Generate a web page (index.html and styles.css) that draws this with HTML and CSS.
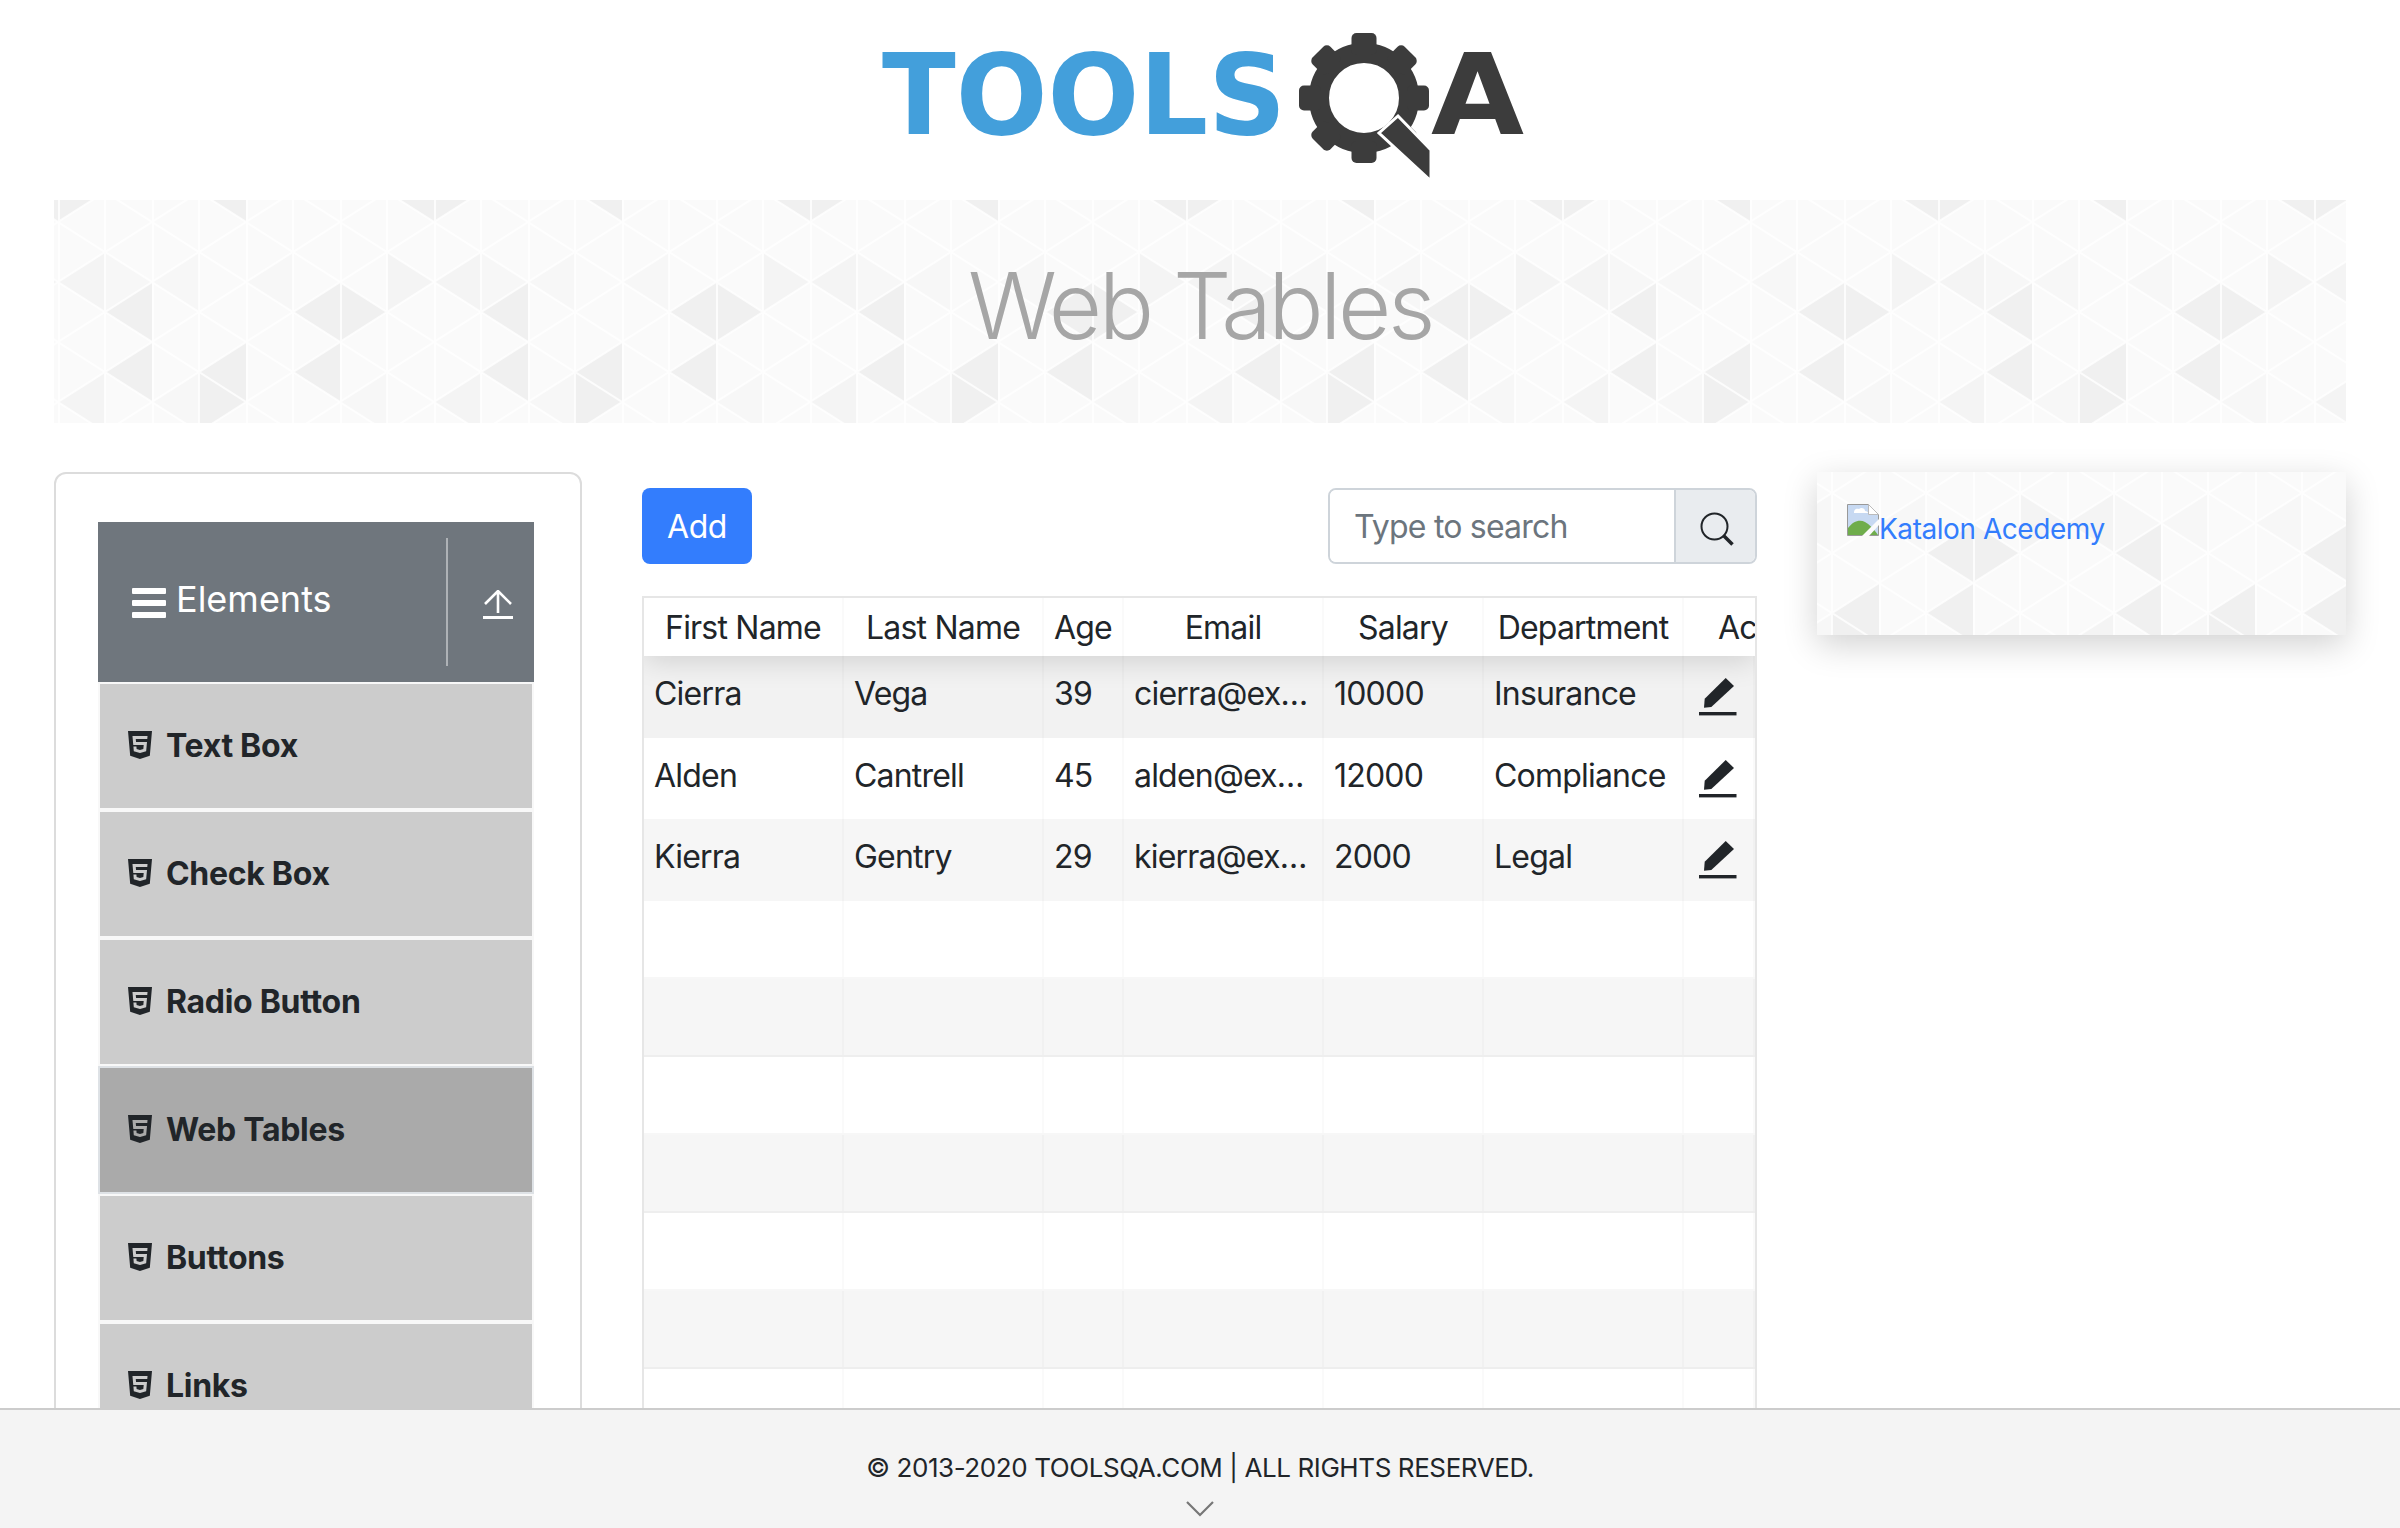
FILE: index.html
```html
<!DOCTYPE html>
<html lang="en">
<head>
  <meta charset="UTF-8" />
  <title>Web Tables</title>
  <link rel="stylesheet" href="styles.css">
</head>
<body>
  <svg class="defs" width="0" height="0">
    <symbol id="html5" viewBox="0 0 384 512">
      <path d="M0 32l34.9 395.8L191.5 480l157.6-52.2L384 32H0zm308.2 127.9H124.4l4.1 49.4h175.6l-13.6 148.4-97.9 27v.3h-1.1l-98.7-27.3-6-75.8h47.7L138 320l53.5 14.5 53.7-14.5 6-62.2H84.3L71.5 112.2h241.1l-4.4 47.7z"/>
    </symbol>
    <symbol id="pencil" viewBox="0 0 38 38">
      <path d="M26.7 0L35 8 12.3 29l-7.3.7.7-9z"/>
      <rect x="0" y="34" width="37.5" height="3.4"/>
    </symbol>
  </svg>

  <div class="page">
    <header class="logo-bar">
      <svg class="logo" width="650" height="200" viewBox="875 0 650 200">
        <text class="logo-tools" x="882" y="134" textLength="404" lengthAdjust="spacingAndGlyphs">TOOLS</text>
        <g class="logo-gear">
          <circle cx="1364" cy="98" r="45" fill="none" stroke="#3c3c3c" stroke-width="20"/>
          <rect x="1351.5" y="33" width="25" height="22" rx="5"/>
          <rect x="1351.5" y="33" width="25" height="22" rx="5" transform="rotate(45 1364 98)"/>
          <rect x="1351.5" y="33" width="25" height="22" rx="5" transform="rotate(90 1364 98)"/>
          <rect x="1351.5" y="33" width="25" height="22" rx="5" transform="rotate(135 1364 98)"/>
          <rect x="1351.5" y="33" width="25" height="22" rx="5" transform="rotate(180 1364 98)"/>
          <rect x="1351.5" y="33" width="25" height="22" rx="5" transform="rotate(225 1364 98)"/>
          <rect x="1351.5" y="33" width="25" height="22" rx="5" transform="rotate(270 1364 98)"/>
          <rect x="1351.5" y="33" width="25" height="22" rx="5" transform="rotate(315 1364 98)"/>
        </g>
        <path d="M1398 116l33 34v31l-52-48z" fill="#3c3c3c" stroke="#fff" stroke-width="3"/>
        <text class="logo-a" x="1431" y="134" textLength="93" lengthAdjust="spacingAndGlyphs">A</text>
      </svg>
    </header>

    <div class="banner tri-bg">
      <h1 class="banner-title">Web Tables</h1>
    </div>

    <div class="content">
      <aside class="side-card">
        <div class="group-header">
          <div class="group-title">
            <span class="burger"><i></i><i></i><i></i></span>
            <span>Elements</span>
          </div>
          <div class="group-toggle">
            <svg width="30" height="30" viewBox="0 0 30 30" fill="none" stroke="#fff" stroke-width="2.600">
              <path d="M15 1v22M2 14L15 1l13 13"/>
              <path d="M0 27.500h30" stroke-width="3"/>
            </svg>
          </div>
        </div>
        <ul class="menu">
          <li class="menu-item"><svg class="item-icon"><use href="#html5"/></svg>Text Box</li>
          <li class="menu-item"><svg class="item-icon"><use href="#html5"/></svg>Check Box</li>
          <li class="menu-item"><svg class="item-icon"><use href="#html5"/></svg>Radio Button</li>
          <li class="menu-item active"><svg class="item-icon"><use href="#html5"/></svg>Web Tables</li>
          <li class="menu-item"><svg class="item-icon"><use href="#html5"/></svg>Buttons</li>
          <li class="menu-item"><svg class="item-icon"><use href="#html5"/></svg>Links</li>
        </ul>
      </aside>

      <main class="main">
        <div class="toolbar">
          <button class="add-btn">Add</button>
          <div class="search">
            <input class="search-input" type="text" placeholder="Type to search" />
            <span class="search-addon">
              <svg width="34" height="34" viewBox="0 0 34 34" fill="none" stroke="#212529" stroke-width="2">
                <circle cx="14.500" cy="14.500" r="13"/>
                <path d="M24 24l8.500 8.500" stroke-width="3.600"/>
              </svg>
            </span>
          </div>
        </div>

        <div class="grid-table">
          <div class="grid-row grid-head">
            <div class="cell">First Name</div>
            <div class="cell">Last Name</div>
            <div class="cell">Age</div>
            <div class="cell">Email</div>
            <div class="cell">Salary</div>
            <div class="cell">Department</div>
            <div class="cell cell-action">Action</div>
          </div>
          <div class="grid-row filled">
            <div class="cell">Cierra</div>
            <div class="cell">Vega</div>
            <div class="cell">39</div>
            <div class="cell">cierra@example.com</div>
            <div class="cell">10000</div>
            <div class="cell">Insurance</div>
            <div class="cell"><svg class="edit-icon"><use href="#pencil"/></svg></div>
          </div>
          <div class="grid-row filled">
            <div class="cell">Alden</div>
            <div class="cell">Cantrell</div>
            <div class="cell">45</div>
            <div class="cell">alden@example.com</div>
            <div class="cell">12000</div>
            <div class="cell">Compliance</div>
            <div class="cell"><svg class="edit-icon"><use href="#pencil"/></svg></div>
          </div>
          <div class="grid-row filled">
            <div class="cell">Kierra</div>
            <div class="cell">Gentry</div>
            <div class="cell">29</div>
            <div class="cell">kierra@example.com</div>
            <div class="cell">2000</div>
            <div class="cell">Legal</div>
            <div class="cell"><svg class="edit-icon"><use href="#pencil"/></svg></div>
          </div>
          <div class="grid-row"><div class="cell"></div><div class="cell"></div><div class="cell"></div><div class="cell"></div><div class="cell"></div><div class="cell"></div><div class="cell"></div></div>
          <div class="grid-row"><div class="cell"></div><div class="cell"></div><div class="cell"></div><div class="cell"></div><div class="cell"></div><div class="cell"></div><div class="cell"></div></div>
          <div class="grid-row"><div class="cell"></div><div class="cell"></div><div class="cell"></div><div class="cell"></div><div class="cell"></div><div class="cell"></div><div class="cell"></div></div>
          <div class="grid-row"><div class="cell"></div><div class="cell"></div><div class="cell"></div><div class="cell"></div><div class="cell"></div><div class="cell"></div><div class="cell"></div></div>
          <div class="grid-row"><div class="cell"></div><div class="cell"></div><div class="cell"></div><div class="cell"></div><div class="cell"></div><div class="cell"></div><div class="cell"></div></div>
          <div class="grid-row"><div class="cell"></div><div class="cell"></div><div class="cell"></div><div class="cell"></div><div class="cell"></div><div class="cell"></div><div class="cell"></div></div>
          <div class="grid-row"><div class="cell"></div><div class="cell"></div><div class="cell"></div><div class="cell"></div><div class="cell"></div><div class="cell"></div><div class="cell"></div></div>
        </div>
      </main>

      <div class="ad-col">
        <div class="ad-box tri-bg">
          <a class="ad-link" href="#">
            <svg class="broken-img" width="32" height="32" viewBox="0 0 32 32">
              <path d="M.5.5h21l10 10v21H.5z" fill="#c7d9f2" stroke="#999"/>
              <path d="M21.500.5v10h10z" fill="#fff" stroke="#bbb"/>
              <path d="M1 31V24c5-7 12-9 17-6 4 2 9 7 13 13z" fill="#6fad4c"/>
              <path d="M7 8c0-3 3-4 5-3 2-2 6-1 6 2 2 0 3 1 3 2H7z" fill="#fff"/>
              <path d="M15 32L32 15v6L22 32z" fill="#fbfbfb"/>
            </svg>Katalon Acedemy
          </a>
        </div>
      </div>
    </div>
  </div>

  <footer class="footer">
    <span class="footer-text">© 2013-2020 TOOLSQA.COM | ALL RIGHTS RESERVED.</span>
    <svg class="footer-chevron" width="28" height="16" viewBox="0 0 28 16" fill="none" stroke="#777" stroke-width="2.200">
      <path d="M1 1l13 13L27 1"/>
    </svg>
  </footer>
</body>
</html>
```

FILE: styles.css
```css
* {
  box-sizing: border-box;
}
html, body {
  height: 100%;
}
body {
  margin: 0;
  overflow: hidden;
  background: #fff;
  color: #212529;
  font-family: Inter, "Noto Sans", sans-serif;
  font-size: 32px;
}
.defs {
  display: block;
}
.page {
  height: 100vh;
  padding: 0 54px;
  overflow: hidden;
}

/* logo */
.logo-bar {
  height: 200px;
  display: flex;
  justify-content: center;
}
.logo-tools {
  font-family: "DejaVu Sans", sans-serif;
  font-weight: bold;
  font-size: 112px;
  fill: #439fdb;
}
.logo-a {
  font-family: "DejaVu Sans", sans-serif;
  font-weight: bold;
  font-size: 112px;
  fill: #3c3c3c;
}
.logo-gear {
  fill: #3c3c3c;
}

/* triangle pattern */
.tri-bg {
  background-color: #fafafa;
  background-image: url("data:image/svg+xml,%3Csvg xmlns='http://www.w3.org/2000/svg' width='376' height='240'%3E%3Cdefs%3E%3Cpattern id='p' width='94' height='60' patternUnits='userSpaceOnUse'%3E%3Cpath d='M0 22L47 52L94 22M0 22L47 -8L94 22M0 82L47 52L94 82M1 0V60M47 0V60' fill='none' stroke='%23fff' stroke-width='2' opacity='.8'/%3E%3C/pattern%3E%3C/defs%3E%3Crect width='376' height='240' fill='%23fafafa'/%3E%3Cg fill='%23f0f0f0'%3E%3Cpath d='M47 112L94 82V142z'/%3E%3Cpath d='M47 172L94 142V202z'/%3E%3Cpath d='M141 172L188 142V202z'/%3E%3Cpath d='M235 112L282 82V142z'/%3E%3Cpath d='M329 112L282 82V142z'/%3E%3Cpath d='M235 172L282 142V202z'/%3E%3Cpath d='M141 -8L188 -38V22z'/%3E%3Cpath d='M329 -8L376 -38V22z'/%3E%3Cpath d='M47 -8L0 -38V22z'/%3E%3Cpath d='M188 202L141 172V232z'/%3E%3C/g%3E%3Cg fill='%23f4f4f4'%3E%3Cpath d='M376 82L329 52V112z'/%3E%3Cpath d='M0 82L47 52V112z'/%3E%3Cpath d='M0 202L47 172V232z'/%3E%3C/g%3E%3Cg fill='%23f7f7f7'%3E%3Cpath d='M94 82L47 52V112z'/%3E%3Cpath d='M94 82L141 52V112z'/%3E%3Cpath d='M94 202L141 172V232z'/%3E%3Cpath d='M188 82L235 52V112z'/%3E%3Cpath d='M282 202L329 172V232z'/%3E%3C/g%3E%3Crect width='376' height='240' fill='url(%23p)'/%3E%3C/svg%3E");
  background-repeat: repeat;
}
.banner {
  height: 223px;
  padding-bottom: 13px;
  background-position: 4px 0;
  display: flex;
  align-items: center;
  justify-content: center;
}
.banner-title {
  margin: 0;
  font-size: 92px;
  font-weight: 300;
  letter-spacing: -3.5px;
  color: #a6a6a6;
}

.content {
  display: flex;
  gap: 60px;
  margin-top: 49px;
}

/* left menu */
.side-card {
  flex: 0 0 528px;
  height: 1100px;
  padding: 48px 46px 0 42px;
  border: 2px solid #dcdcdc;
  border-radius: 12px;
}
.group-header {
  height: 160px;
  display: flex;
  background: #6f767d;
  color: #fff;
}
.group-title {
  flex: 1;
  display: flex;
  align-items: center;
  gap: 10px;
  padding: 0 0 6px 34px;
  font-size: 36px;
}
.burger {
  display: flex;
  flex-direction: column;
  gap: 6px;
  width: 34px;
  margin-top: 8px;
}
.burger i {
  display: block;
  height: 6px;
  background: #fff;
  border-radius: 1px;
}
.group-toggle {
  flex: 0 0 88px;
  margin: 16px 0;
  padding: 0 0 0 35px;
  border-left: 2px solid #aeb2b6;
  display: flex;
  align-items: center;
}
.group-toggle svg {
  margin-top: 6px;
}
.menu {
  list-style: none;
  margin: 0;
  padding: 0;
}
.menu-item {
  height: 128px;
  display: flex;
  align-items: center;
  gap: 14px;
  padding: 0 0 2px 28px;
  border: 2px solid #f8f8f8;
  background: #ccc;
  font-weight: 700;
  letter-spacing: -0.3px;
}
.menu-item.active {
  background: #aaa;
  border-color: #dee2e6;
}
.item-icon {
  width: 24px;
  height: 32px;
  fill: #212529;
}

/* table */
.main {
  flex: 0 0 1115px;
  padding-top: 16px;
}
.toolbar {
  display: flex;
  justify-content: space-between;
  margin-bottom: 32px;
}
.add-btn {
  width: 110px;
  height: 76px;
  padding: 0;
  border: 0;
  border-radius: 8px;
  background: #337dfd;
  color: #fff;
  font: inherit;
  letter-spacing: -0.5px;
}
.search {
  display: flex;
  width: 429px;
  height: 76px;
  border: 2px solid #ced4da;
  border-radius: 8px;
  overflow: hidden;
}
.search-input {
  flex: 1;
  min-width: 0;
  padding: 0 24px;
  border: 0;
  outline: 0;
  font: inherit;
  letter-spacing: -0.8px;
}
.search-input::placeholder {
  color: #6c757d;
  opacity: 1;
}
.search-addon {
  flex: 0 0 81px;
  display: flex;
  align-items: center;
  padding: 6px 0 0 24px;
  border-left: 2px solid #ced4da;
  background: #e9ecef;
}
.grid-table {
  border: 2px solid #e6e6e6;
  overflow: hidden;
}
.grid-row {
  display: grid;
  grid-template-columns: 200px 200px 80px 200px 160px 200px 71px;
  height: 78px;
  border-bottom: 2px solid rgba(0, 0, 0, 0.03);
  letter-spacing: -0.8px;
}
.grid-row:nth-child(even) {
  background: rgba(0, 0, 0, 0.035);
}
.grid-row.filled {
  height: 81.6px;
  border-bottom: 0;
}
.grid-row.filled:nth-child(2) {
  background: rgba(0, 0, 0, 0.05);
}
.grid-head {
  position: relative;
  height: 58px;
  border-bottom: 0;
  box-shadow: 0 4px 30px rgba(0, 0, 0, 0.15);
  background: #fff;
}
.cell {
  padding: 0 10px 6px;
  display: flex;
  align-items: center;
  border-right: 2px solid rgba(0, 0, 0, 0.02);
  overflow: hidden;
  white-space: nowrap;
}
.grid-row.filled .cell {
  display: block;
  line-height: 75px;
  text-overflow: ellipsis;
}
.grid-head .cell {
  justify-content: center;
  padding: 0;
}
.grid-head .cell-action {
  justify-content: flex-start;
  padding-left: 34px;
  border-right: 0;
}
.edit-icon {
  display: block;
  width: 38px;
  height: 38px;
  margin: 22px 0 0 5px;
  fill: #212529;
}

/* ad box */
.ad-col {
  flex: 1;
}
.ad-box {
  height: 163px;
  padding: 32px 30px 0;
  background-position: 250px -31px;
  box-shadow: 0 10px 32px rgba(0, 0, 0, 0.18);
}
.ad-link {
  color: #337dfd;
  font-size: 28px;
  letter-spacing: -0.45px;
  text-decoration: none;
}
.broken-img {
  vertical-align: 3px;
}

/* footer */
.footer {
  position: fixed;
  left: 0;
  right: 0;
  bottom: 0;
  height: 120px;
  padding-top: 41px;
  background: #f4f4f4;
  border-top: 2px solid #ccc;
  text-align: center;
  font-size: 26px;
  letter-spacing: -0.41px;
}
.footer-text {
  display: block;
  line-height: 34px;
}
.footer-chevron {
  display: block;
  margin: 16px auto 0;
}
```
